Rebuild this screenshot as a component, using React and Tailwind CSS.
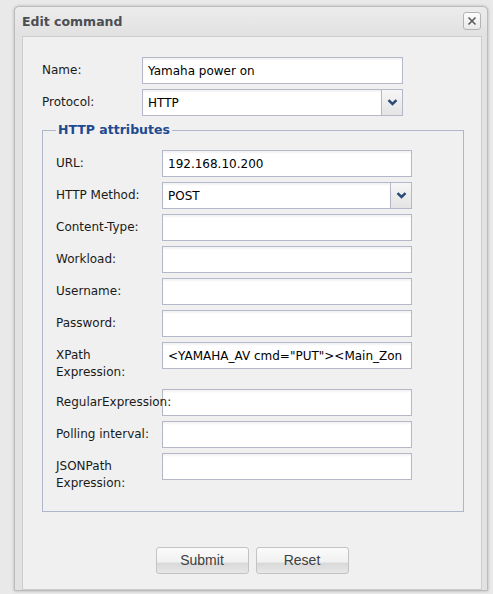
import React from 'react';

const font = "font-['DejaVu_Sans',sans-serif]";

const Chevron = () => (
  <svg width="11" height="7" viewBox="0 0 11 7">
    <polyline points="1.5,1.2 5.5,5 9.5,1.2" fill="none" stroke="#2b4a78" strokeWidth="2.5" strokeLinejoin="miter" />
  </svg>
);

const TextBox = ({ value = '', width }) => (
  <div
    className={`${width} h-[27px] shrink-0 border border-[#b5b8c8] bg-white shadow-[inset_0_2px_2px_rgba(0,0,0,0.05)] px-[5px] text-[12px] leading-[27px] text-black whitespace-nowrap overflow-hidden`}
  >
    {value}
  </div>
);

const SelectBox = ({ value, width }) => (
  <div className={`${width} h-[27px] shrink-0 flex border border-[#b5b8c8] bg-white`}>
    <div className="flex-1 px-[5px] text-[12px] leading-[27px] text-black shadow-[inset_0_2px_2px_rgba(0,0,0,0.05)] overflow-hidden">{value}</div>
    <div className="w-[21px] border-l border-[#b5b8c8] bg-[linear-gradient(#f6f6f6,#e4e4e4)] flex items-center justify-center">
      <Chevron />
    </div>
  </div>
);

const Row = ({ label, children, labelWidth }) => (
  <div className="flex items-start">
    <div className={`${labelWidth} shrink-0 pt-[5px] pb-[3px] pr-[4px] text-[12px] leading-[17px] text-[#1a1a1a] relative z-10`}>
      {label}
    </div>
    {children}
  </div>
);

const attributes = [
  { label: 'URL:', value: '192.168.10.200' },
  { label: 'HTTP Method:', value: 'POST', select: true },
  { label: 'Content-Type:' },
  { label: 'Workload:' },
  { label: 'Username:' },
  { label: 'Password:' },
  { label: 'XPath Expression:', value: '<YAMAHA_AV cmd="PUT"><Main_Zon' },
  { label: <span className="whitespace-nowrap">RegularExpression:</span> },
  { label: 'Polling interval:' },
  { label: 'JSONPath Expression:' },
];

export default function App() {
  return (
    <div className={`h-[594px] overflow-hidden bg-[#e9e9e9] pt-[6px] pl-[14px] ${font}`}>
      <div className="w-[474px] border border-[#bcbcbc] rounded-t-[5px] bg-[#e2e2e2] shadow-[0_0_3px_rgba(0,0,0,0.25)]">
        {/* title bar */}
        <div className="h-[29px] flex items-center justify-between pl-[7px] pr-[6px] rounded-t-[5px] bg-[linear-gradient(#ececec,#e1e1e1)]">
          <span className="font-bold text-[12.5px] text-[#4b4e53] pt-[1px]">Edit command</span>
          <div className="w-[18px] h-[18px] border border-[#b3b3b3] rounded-[3px] bg-[linear-gradient(#fdfdfd,#e9e9e9)] flex items-center justify-center mb-[1px]">
            <svg width="10" height="10" viewBox="0 0 10 10">
              <path d="M1.5 1.5L8.5 8.5M8.5 1.5L1.5 8.5" stroke="#5a5a5a" strokeWidth="1.6" />
            </svg>
          </div>
        </div>

        {/* body */}
        <div className="ml-[7px] w-[460px] border border-[#cdcdcd] bg-[#f0f0f0] pt-[20px] pl-[19px] pb-[15px]">
          <div className="flex flex-col gap-[5px]">
            <Row label="Name:" labelWidth="w-[100px]">
              <TextBox value="Yamaha power on" width="w-[261px]" />
            </Row>
            <Row label="Protocol:" labelWidth="w-[100px]">
              <SelectBox value="HTTP" width="w-[261px]" />
            </Row>
          </div>

          <fieldset className="mt-[6px] w-[422px] border border-[#b1b5c9] pl-[13px] pt-[12px] pb-[16px]">
            <legend className="px-[2px] text-[12.5px] leading-[16px] font-bold text-[#1e4a91]">HTTP attributes</legend>
            <div className="flex flex-col gap-[5px]">
              {attributes.map((a, i) => (
                <Row key={i} label={a.label} labelWidth="w-[106px]">
                  {a.select ? (
                    <SelectBox value={a.value} width="w-[250px]" />
                  ) : (
                    <TextBox value={a.value} width="w-[250px]" />
                  )}
                </Row>
              ))}
            </div>
          </fieldset>

          <div className="mt-[35px] pr-[19px] flex justify-center gap-[7px]">
            {['Submit', 'Reset'].map((t) => (
              <button
                key={t}
                className="w-[93px] h-[27px] border border-[#c3c3c3] rounded-[3px] bg-[linear-gradient(#fbfbfb,#f1f1f1_55%,#d9d9d9_62%,#e7e7e7)] font-['Liberation_Sans',sans-serif] text-[14px] text-[#404040]"
              >
                {t}
              </button>
            ))}
          </div>
        </div>
      </div>
    </div>
  );
}
